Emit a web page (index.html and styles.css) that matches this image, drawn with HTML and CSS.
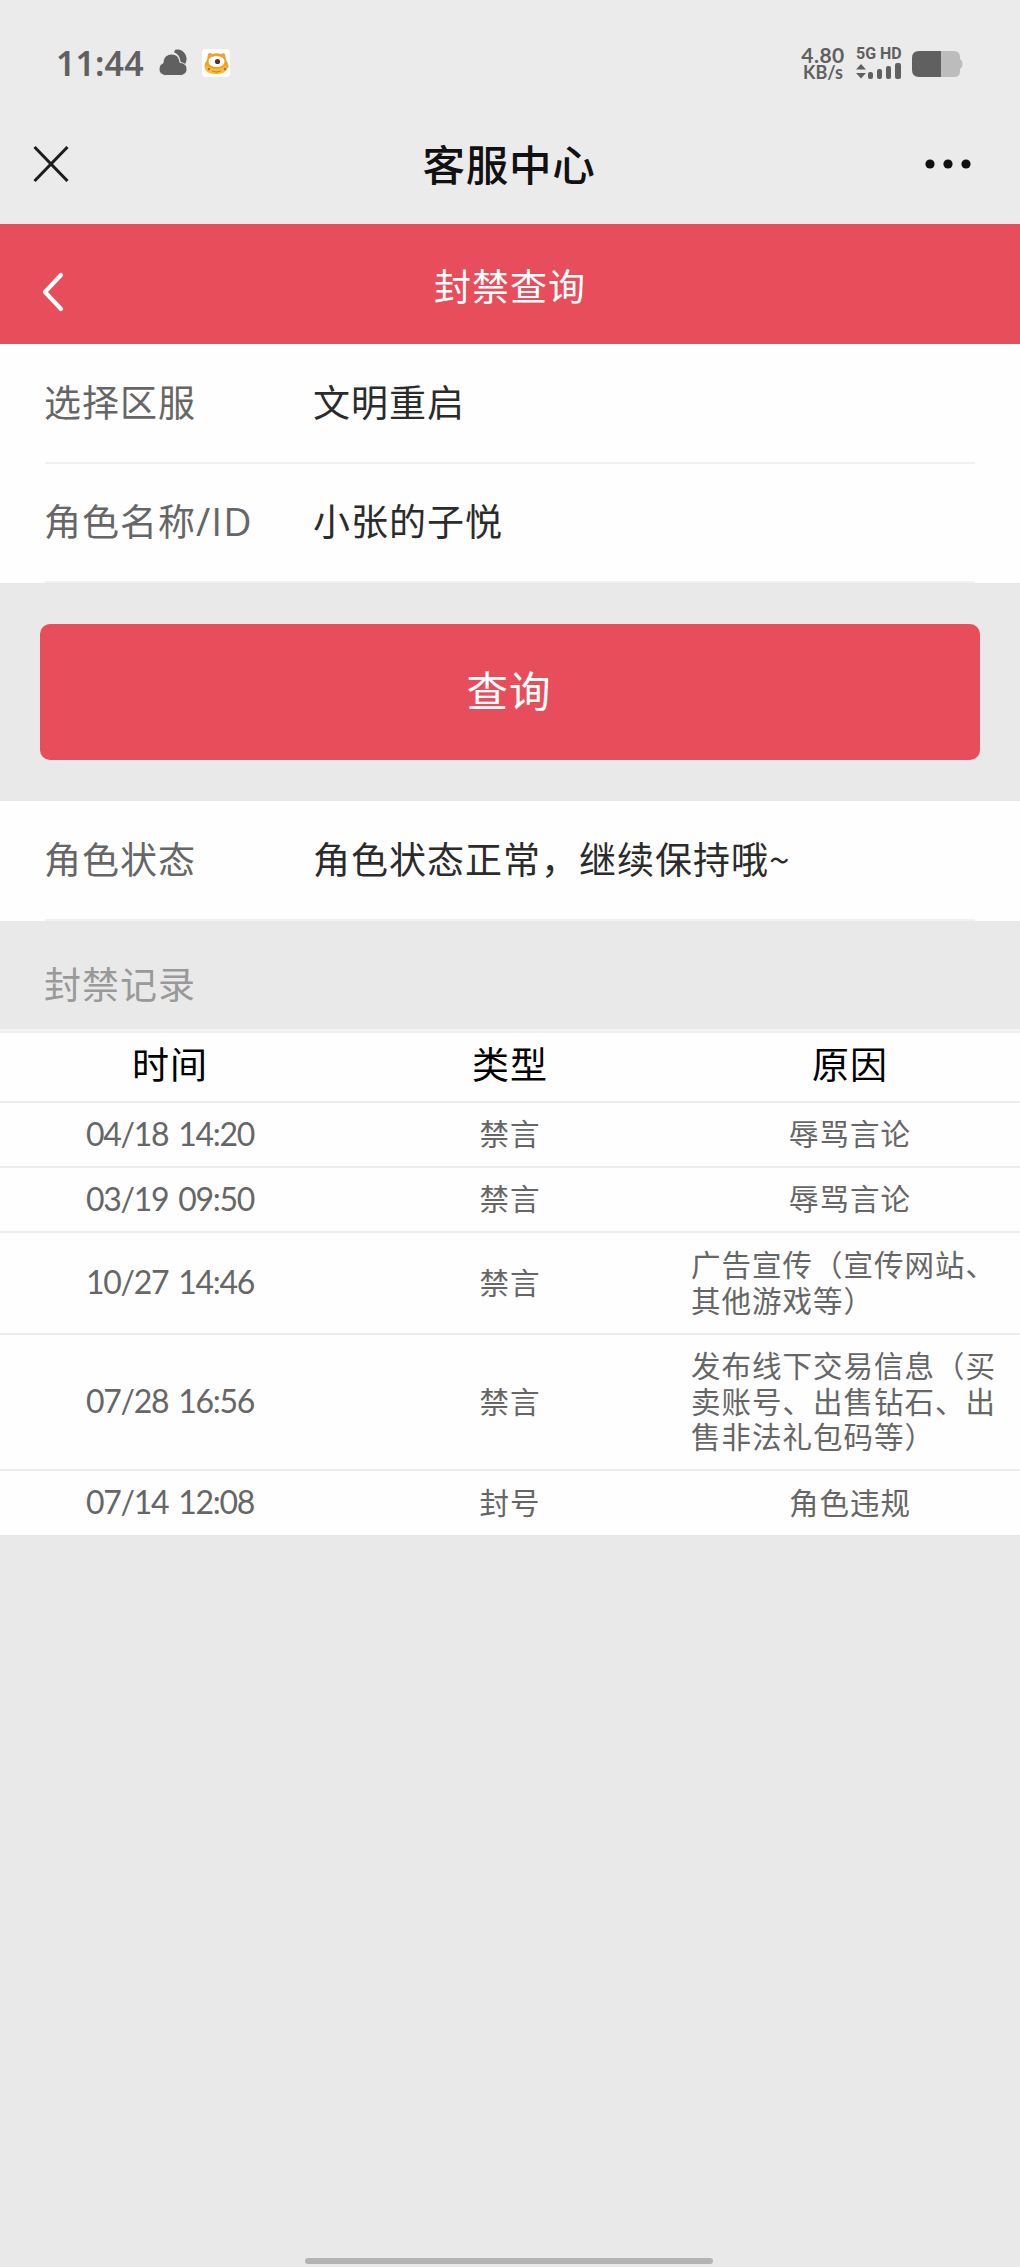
FILE: index.html
```html
<!DOCTYPE html>
<html lang="zh-CN">
<head>
<meta charset="utf-8">
<title>客服中心</title>
<link rel="stylesheet" href="styles.css">
</head>
<body>
<div class="screen">
  <div class="status">
    <span class="clock">11:44</span>
    <svg class="cloud" width="30" height="28" viewBox="0 0 30 28"><path d="M16 1c6-2 11 3 11.500 8 .2 3-.8 5.500-2 7-1-1.500-2.500-2.500-4-3C21 8 19 4.500 15 3.500z" fill="#606060"/><path d="M7 26.500c-4 0-7-2.700-7-6.500 0-3 1.500-5 4-6C4 8.500 8 5 12.500 5c5 0 8 3.500 8.500 8.500 3.700 0 7 2.500 7 6.500s-3 6.500-7 6.500z" fill="#606060" stroke="#ebebeb" stroke-width="1"/></svg>
    <svg class="app" width="28" height="28" viewBox="0 0 28 28"><rect width="28" height="28" rx="4" fill="#fff"/><path d="M6 5q2-2 4 0 4-1.500 9 0 3-1.500 4 0l1 6c1.500 2 2.500 4 2.500 7l-3 4c-5 3.500-13 3.500-18 0l-3-4c0-3 1-5 2.500-7z" fill="#eea42b"/><path d="M4 16q10 8 20 0l1 4q-2 5-11 5T3 20z" fill="#f8b93c"/><ellipse cx="14.500" cy="12.500" rx="8" ry="5.500" fill="#fff"/><circle cx="15.500" cy="12.500" r="2.600" fill="#513433"/><circle cx="7" cy="20" r="1.200" fill="#c86a20"/><circle cx="23" cy="20" r="1.200" fill="#c86a20"/><path d="M10 22q5 2 9 0" stroke="#d98020" fill="none"/></svg>
    <div class="speed"><span>4.80</span><span class="unit">KB/s</span></div>
    <div class="signal">
      <span>5G HD</span>
      <svg width="46" height="17" viewBox="0 0 46 17" fill="#606060"><path d="M5 1l5 5.500H0zM5 15.500l5-5.500H0z"/><rect x="12" y="9" width="5" height="7" rx="2"/><rect x="21" y="6" width="5" height="10" rx="2"/><rect x="30" y="3" width="5" height="13" rx="2"/><rect x="39" y="0" width="6" height="16" rx="2"/></svg>
    </div>
    <svg class="battery" width="51" height="26" viewBox="0 0 51 26"><path d="M29 0h13q6 0 6 6v2l2 2q1 3 0 6l-2 2v2q0 6-6 6H29z" fill="#bcbcbc"/><path d="M7 0h22v26H7q-7 0-7-7V7q0-7 7-7z" fill="#606060"/></svg>
  </div>

  <header class="titlebar">
    <svg width="36" height="36" viewBox="0 0 36 36"><path d="M1.500 1l33 34M34.500 1l-33 34" stroke="#1d1d1d" stroke-width="3" fill="none"/></svg>
    <h1>客服中心</h1>
    <svg width="46" height="10" viewBox="0 0 46 10" fill="#111"><circle cx="5" cy="5" r="4.600"/><circle cx="23" cy="5" r="4.600"/><circle cx="41" cy="5" r="4.600"/></svg>
  </header>

  <nav class="navbar">
    <svg width="24" height="40" viewBox="0 0 24 40"><path d="M20 3L4 20l16 17" stroke="#fff" stroke-width="4.200" stroke-linecap="round" stroke-linejoin="round" fill="none"/></svg>
    <h2>封禁查询</h2>
  </nav>

  <section class="fields">
    <div class="field"><span class="label">选择区服</span><span class="value">文明重启</span></div>
    <div class="field"><span class="label">角色名称<span class="latin">/ID</span></span><span class="value">小张的子悦</span></div>
  </section>

  <button class="query" type="button">查询</button>

  <section class="fields">
    <div class="field"><span class="label">角色状态</span><span class="value">角色状态正常，继续保持哦~</span></div>
  </section>

  <h3 class="caption">封禁记录</h3>

  <div class="records">
    <div class="row head"><span>时间</span><span>类型</span><span>原因</span></div>
    <div class="row"><time>04/18 14:20</time><span>禁言</span><span>辱骂言论</span></div>
    <div class="row"><time>03/19 09:50</time><span>禁言</span><span>辱骂言论</span></div>
    <div class="row two"><time>10/27 14:46</time><span>禁言</span><span class="long">广告宣传（宣传网站、<br>其他游戏等）</span></div>
    <div class="row three"><time>07/28 16:56</time><span>禁言</span><span class="long">发布线下交易信息（买<br>卖账号、出售钻石、出<br>售非法礼包码等）</span></div>
    <div class="row last"><time>07/14 12:08</time><span>封号</span><span>角色违规</span></div>
  </div>

  <div class="home"></div>
</div>
</body>
</html>
```
FILE: styles.css
```css
* { box-sizing: border-box; }
body { margin: 0; }
h1, h2, h3 { margin: 0; font-weight: 400; }
svg { display: block; flex: none; }

.screen {
  width: 1020px;
  height: 2267px;
  display: flex;
  flex-direction: column;
  background: #e9e9e9;
  color: #2b2b2b;
  font-family: "Noto Sans CJK SC", sans-serif;
  overflow: hidden;
  white-space: nowrap;
}

.status {
  height: 104px;
  flex: none;
  padding: 0 57px 0 56px;
  display: flex;
  align-items: flex-start;
  background: #ebebeb;
  color: #606060;
}
.clock {
  width: 103px;
  padding-top: 43px;
  font: 600 34px/40px "Noto Sans", sans-serif;
  letter-spacing: 0.100px;
}
.cloud { margin-top: 49px; }
.app { margin: 49px auto 0 13px; }
.speed {
  width: 46px;
  padding-top: 46px;
  display: flex;
  flex-direction: column;
  align-items: center;
  font: 700 21px/18px Lato, sans-serif;
  letter-spacing: 0.500px;
}
.speed .unit { font-size: 18px; line-height: 17px; letter-spacing: 0; }
.signal {
  margin-left: 10px;
  padding-top: 45px;
  width: 47px;
  font: 700 16px/17px Roboto, sans-serif;
}
.signal svg { margin-top: 1px; }
.battery { margin: 51px 0 0 9px; }

.titlebar {
  height: 120px;
  flex: none;
  padding: 0 49px 1px 33px;
  display: grid;
  grid-template-columns: 46px 1fr 46px;
  align-items: center;
  background: #ebebeb;
}
.titlebar h1 {
  text-align: center;
  font-size: 42.500px;
  font-weight: 500;
  line-height: 60px;
  letter-spacing: 0.800px;
  padding: 0 0 2px 14px;
  color: #111;
}

.navbar {
  height: 120px;
  flex: none;
  padding: 0 37px 0 41px;
  display: grid;
  grid-template-columns: 24px 1fr 24px;
  align-items: center;
  background: #e84d5b;
  color: #fff;
}
.navbar svg { margin-top: 16px; }
.navbar h2 {
  padding-right: 4px;
  text-align: center;
  font-size: 37px;
  line-height: 54px;
  letter-spacing: 1px;
  margin-top: 2px;
}

.fields { background: #fefefe; padding: 0 45px; flex: none; }
.field {
  height: 119.500px;
  display: flex;
  align-items: center;
  padding-bottom: 4px;
  border-bottom: 2px solid #f1f1f1;
  font-size: 37px;
  letter-spacing: 1px;
}
.label { width: 269px; margin-left: -1px; color: #666; }
.latin { font-family: "Open Sans", sans-serif; font-size: 39px; line-height: 1; }

.query {
  flex: none;
  margin: 41px 40px;
  height: 136px;
  padding: 0 2px 6px 0;
  border: 0;
  border-radius: 10px;
  background: #e84d5b;
  color: #fff;
  font: 400 41.500px/60px "Noto Sans CJK SC", sans-serif;
  letter-spacing: 1px;
}

.caption {
  flex: none;
  height: 108px;
  padding: 35px 44px 0;
  font-size: 37px;
  line-height: 54px;
  letter-spacing: 1px;
  color: #999;
}

.records {
  flex: none;
  background: #fefefe;
  border-top: 2px solid #f4f4f4;
}
.row {
  height: 65px;
  display: grid;
  grid-template-columns: repeat(3, 340px);
  align-items: center;
  text-align: center;
  padding-bottom: 2px;
  border-bottom: 2px solid #ececec;
  color: #666;
  font-size: 29.500px;
  line-height: 35.500px;
  letter-spacing: 1px;
}
.row.head { height: 72px; border-top: 2px solid #f0f0f0; padding-bottom: 5px; font-size: 37px; color: #000; }
.row time { font-family: Lato, sans-serif; font-size: 32px; letter-spacing: -1.300px; word-spacing: 3px; padding-top: 1px; }
.row.two { height: 102px; }
.row.three { height: 136px; }
.row.last { height: 64px; border-bottom: 0; }
.long { text-align: left; padding-left: 11px; }

.home {
  flex: none;
  width: 408px;
  height: 6px;
  margin: auto auto 3px;
  border-radius: 3px;
  background: #b3b3b3;
  transform: translateX(-1px);
}
```
